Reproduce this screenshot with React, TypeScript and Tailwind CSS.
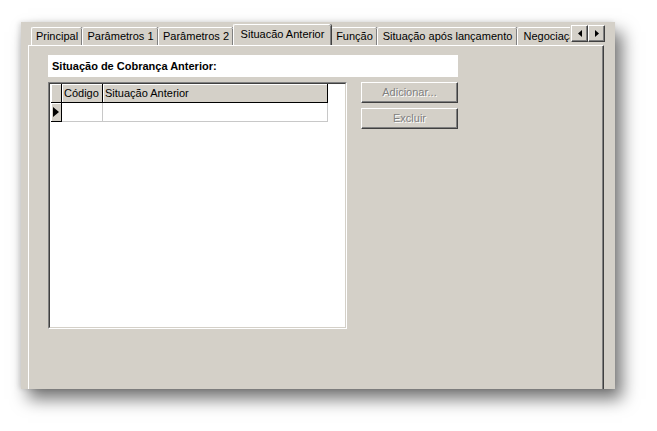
import type { ReactNode } from 'react';

const font = { fontFamily: '"Liberation Sans", Arial, sans-serif' };

function Tab({ label, width, selected }: { label: string; width: number; selected?: boolean }) {
  if (selected) {
    return (
      <div
        className="relative z-10 -mb-px flex h-[22px] shrink-0 items-start justify-center rounded-t-[2px] border-l border-t border-white bg-[#d4d0c8] pt-[3px] shadow-[inset_-1px_0_#808080,1px_0_#404040]"
        style={{ width }}
      >
        {label}
      </div>
    );
  }
  return (
    <div
      className="flex h-[18px] shrink-0 items-start justify-center overflow-hidden whitespace-nowrap rounded-t-[2px] border-l border-t border-white bg-[#d4d0c8] pt-[2px] shadow-[inset_-1px_0_#808080,1px_0_#404040]"
      style={{ width }}
    >
      {label}
    </div>
  );
}

function ArrowButton({ dir }: { dir: 'left' | 'right' }) {
  return (
    <div className="flex h-[17px] w-[17px] items-center justify-center border border-t-white border-l-white border-b-[#404040] border-r-[#404040] bg-[#d4d0c8] shadow-[inset_-1px_-1px_#808080]">
      <svg width="4" height="7" viewBox="0 0 4 7">
        {dir === 'left' ? <path d="M4 0 L0 3.5 L4 7 Z" fill="#000" /> : <path d="M0 0 L4 3.5 L0 7 Z" fill="#000" />}
      </svg>
    </div>
  );
}

function DisabledButton({ children }: { children: ReactNode }) {
  return (
    <div className="flex h-[21px] w-[97px] items-center justify-center border border-t-white border-l-white border-b-[#404040] border-r-[#404040] bg-[#d4d0c8] text-[#808080] shadow-[inset_-1px_-1px_#808080] [text-shadow:1px_1px_0_#fff]">
      {children}
    </div>
  );
}

function HeaderCell({ width, children }: { width: number; children?: ReactNode }) {
  return (
    <div
      className="flex h-full shrink-0 items-center border-r border-b border-r-black border-b-black bg-[#d4d0c8] pl-[2px] shadow-[inset_1px_1px_#fff]"
      style={{ width }}
    >
      {children}
    </div>
  );
}

export default function App() {
  return (
    <div className="h-[431px] w-[657px] bg-white text-[11px] leading-[13px] text-black" style={font}>
      <div className="ml-[21px] h-[22px]" />
      <div className="ml-[21px] flex h-[367px] w-[594px] flex-col bg-[#d4d0c8] pl-[7px] pt-[2px] shadow-[7px_10px_16px_rgba(0,0,0,0.55),-2px_0_5px_rgba(0,0,0,0.12)]">
        {/* tab strip */}
        <div className="flex h-[21px] w-[577px] items-end">
          <div className="flex h-full w-[542px] items-end overflow-hidden pl-[3px]">
            <Tab label="Principal" width={51} />
            <Tab label="Parâmetros 1" width={76} />
            <Tab label="Parâmetros 2" width={75} />
            <Tab label="Situacão Anterior" width={98} selected />
            <Tab label="Função" width={46} />
            <Tab label="Situação após lançamento" width={140} />
            <Tab label="Negociação" width={70} />
          </div>
          <div className="mb-[3px] ml-px flex">
            <ArrowButton dir="left" />
            <ArrowButton dir="right" />
          </div>
        </div>

        {/* tab page */}
        <div className="flex w-[576px] flex-1 flex-col border-l border-t border-r border-l-white border-t-white border-r-[#404040] pl-[19px] pt-[9px] shadow-[inset_-1px_0_#808080]">
          <div className="flex h-[22px] w-[410px] items-center bg-white pl-[4px] font-bold">
            Situação de Cobrança Anterior:
          </div>

          <div className="mt-[5px] flex gap-[14px]">
            {/* grid */}
            <div className="h-[247px] w-[299px] border border-t-[#808080] border-l-[#808080] border-b-white border-r-white">
              <div className="h-full w-full border border-t-[#404040] border-l-[#404040] border-b-[#d4d0c8] border-r-[#d4d0c8] bg-white pl-px">
                <div className="flex h-[19px]">
                  <HeaderCell width={11} />
                  <HeaderCell width={41}>Código</HeaderCell>
                  <HeaderCell width={225}>Situação Anterior</HeaderCell>
                </div>
                <div className="flex h-[19px]">
                  <div className="flex w-[11px] shrink-0 items-center justify-center border-r border-b border-r-black border-b-black bg-[#d4d0c8] shadow-[inset_1px_1px_#fff]">
                    <svg width="6" height="10" viewBox="0 0 6 10">
                      <path d="M0 0 L6 5 L0 10 Z" fill="#000" />
                    </svg>
                  </div>
                  <div className="w-[41px] shrink-0 border-r border-b border-[#c8c8c8]" />
                  <div className="w-[225px] shrink-0 border-r border-b border-[#c8c8c8]" />
                </div>
              </div>
            </div>

            {/* buttons */}
            <div className="flex flex-col gap-[5px]">
              <DisabledButton>Adicionar...</DisabledButton>
              <DisabledButton>Excluir</DisabledButton>
            </div>
          </div>
        </div>
      </div>
    </div>
  );
}
